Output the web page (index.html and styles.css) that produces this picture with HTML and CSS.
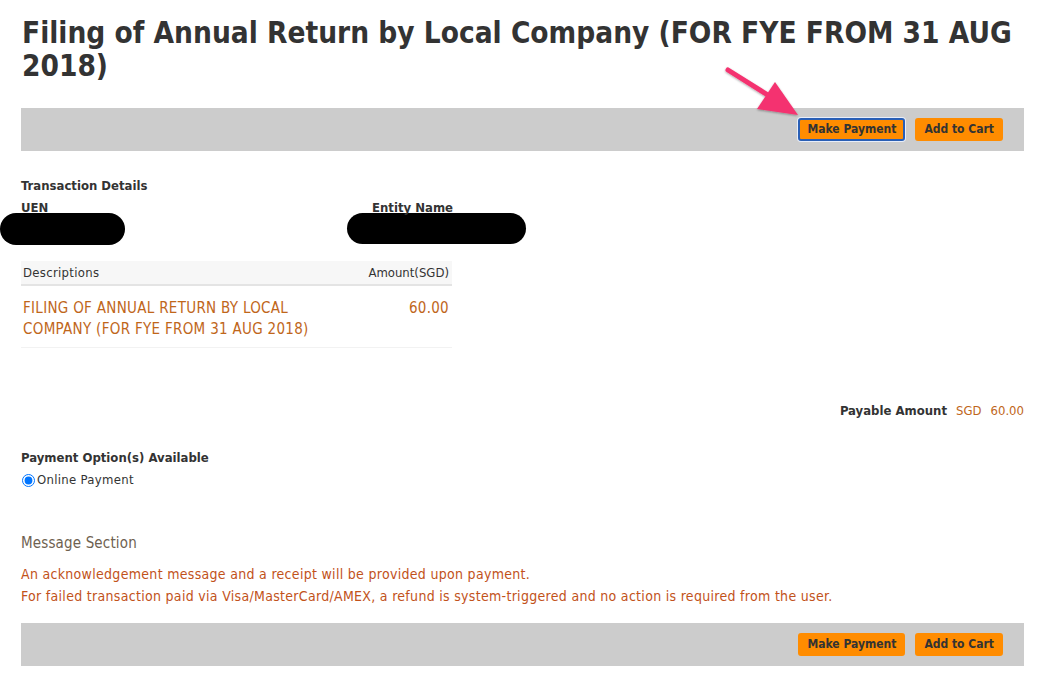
FILE: index.html
```html
<!DOCTYPE html>
<html>
<head>
<meta charset="utf-8">
<link rel="stylesheet" href="styles.css">
</head>
<body>
<div class="page">
  <h1 class="title">Filing of Annual Return by Local Company (FOR FYE FROM 31 AUG 2018)</h1>

  <div class="bar bar-top">
    <button class="btn btn-focus">Make Payment</button>
    <button class="btn">Add to Cart</button>
    <svg class="arrow" width="90" height="60" viewBox="0 0 90 60">
      <defs>
        <filter id="sh" x="-20%" y="-20%" width="140%" height="140%">
          <feDropShadow dx="0" dy="1" stdDeviation="1.2" flood-color="#000" flood-opacity="0.35"/>
        </filter>
      </defs>
      <g filter="url(#sh)">
        <line x1="7" y1="8" x2="50" y2="35" stroke="#f4336f" stroke-width="5" stroke-linecap="round"/>
        <path d="M54 20 L77 53 L36 47 Z" fill="#f4336f"/>
      </g>
    </svg>
  </div>

  <div class="details">
    <div class="label">Transaction Details</div>
    <div class="cols">
      <div class="col col-uen">
        <div class="label">UEN</div>
        <div class="redact redact-uen"></div>
      </div>
      <div class="col col-entity">
        <div class="label">Entity Name</div>
        <div class="redact redact-entity"></div>
      </div>
    </div>
  </div>

  <table class="items">
    <thead>
      <tr><th class="desc">Descriptions</th><th class="amt">Amount(SGD)</th></tr>
    </thead>
    <tbody>
      <tr><td class="desc">FILING OF ANNUAL RETURN BY LOCAL COMPANY (FOR FYE FROM 31 AUG 2018)</td><td class="amt">60.00</td></tr>
    </tbody>
  </table>

  <div class="payable">
    <span class="payable-label">Payable Amount</span>
    <span class="payable-cur">SGD</span>
    <span class="payable-val">60.00</span>
  </div>

  <div class="options">
    <div class="label">Payment Option(s) Available</div>
    <label class="radio"><input type="radio" name="opt" checked>Online Payment</label>
  </div>

  <div class="msg-title">Message Section</div>
  <div class="msgs">
    <p>An acknowledgement message and a receipt will be provided upon payment.</p>
    <p>For failed transaction paid via Visa/MasterCard/AMEX, a refund is system-triggered and no action is required from the user.</p>
  </div>

  <div class="bar bar-bottom">
    <button class="btn">Make Payment</button>
    <button class="btn">Add to Cart</button>
  </div>
</div>
</body>
</html>
```

FILE: styles.css
```css
html, body {
  margin: 0;
  padding: 0;
  background: #fff;
}
body {
  font-family: "DejaVu Sans Condensed", "DejaVu Sans", sans-serif;
  font-size: 13px;
  color: #333;
  letter-spacing: 0.3px;
}
.page {
  padding: 0 28px 20px 21px;
}
.title {
  margin: 0;
  padding-top: 17px;
  padding-left: 1px;
  font-size: 29.5px;
  line-height: 33px;
  font-weight: bold;
  letter-spacing: 0;
  color: #333;
}
.bar {
  background: #cccccc;
  height: 43px;
  display: flex;
  justify-content: flex-end;
  align-items: center;
  gap: 10px;
  padding-right: 21px;
  position: relative;
}
.bar-top {
  margin-top: 25px;
}
.btn {
  font-family: inherit;
  font-size: 12px;
  font-weight: bold;
  letter-spacing: 0;
  color: #333;
  background: #ff8c00;
  border: 2px solid #ff8c00;
  border-radius: 3px;
  height: 23px;
  padding: 0 7px;
  line-height: 19px;
}
.btn-focus {
  border-color: #2a5fb5;
  box-shadow: 0 0 0 1px #e8eefa;
}
.arrow {
  position: absolute;
  left: 700px;
  top: -46px;
  overflow: visible;
}
.details {
  margin-top: 24px;
}
.label {
  font-weight: bold;
  letter-spacing: 0;
  line-height: 22px;
}
.cols {
  display: flex;
}
.col-uen {
  width: 351px;
}
.redact {
  background: #000;
  border-radius: 16px;
  height: 32px;
  margin-top: -6px;
}
.redact-uen {
  width: 125px;
  margin-left: -21px;
}
.redact-entity {
  width: 179px;
  margin-left: -25px;
  height: 31px;
}
.items {
  margin-top: 16px;
  width: 431px;
  border-collapse: collapse;
}
.items th {
  font-weight: normal;
  background: #f7f7f7;
  border-bottom: 2px solid #e4e4e4;
  height: 23px;
  padding: 0 3px 0 2px;
  line-height: 23px;
}
.items th.desc { text-align: left; }
.items th.amt { text-align: right; letter-spacing: 0; }
.items td {
  color: #c0661a;
  font-size: 15px;
  line-height: 21px;
  vertical-align: top;
  padding: 12px 3px 7px 2px;
  border-bottom: 1px solid #f2f2f2;
}
.items td.desc { width: 300px; }
.items td.amt { text-align: right; }
.payable {
  margin-top: 53px;
  display: flex;
  justify-content: flex-end;
  gap: 9px;
  line-height: 20px;
}
.payable-label { font-weight: bold; letter-spacing: 0; }
.payable-cur, .payable-val { color: #c0661a; letter-spacing: 0; }
.options {
  margin-top: 26px;
}
.radio {
  display: flex;
  align-items: center;
  line-height: 22px;
}
.radio input {
  margin: 0 2px 0 1px;
  width: 13px;
  height: 13px;
}
.msg-title {
  margin-top: 41px;
  font-size: 15px;
  letter-spacing: 0.15px;
  color: #6e6150;
  line-height: 22px;
}
.msgs {
  margin-top: 9px;
}
.msgs p {
  margin: 0;
  font-size: 14px;
  color: #c2521a;
  line-height: 22px;
}
.bar-bottom {
  margin-top: 16px;
}
```
